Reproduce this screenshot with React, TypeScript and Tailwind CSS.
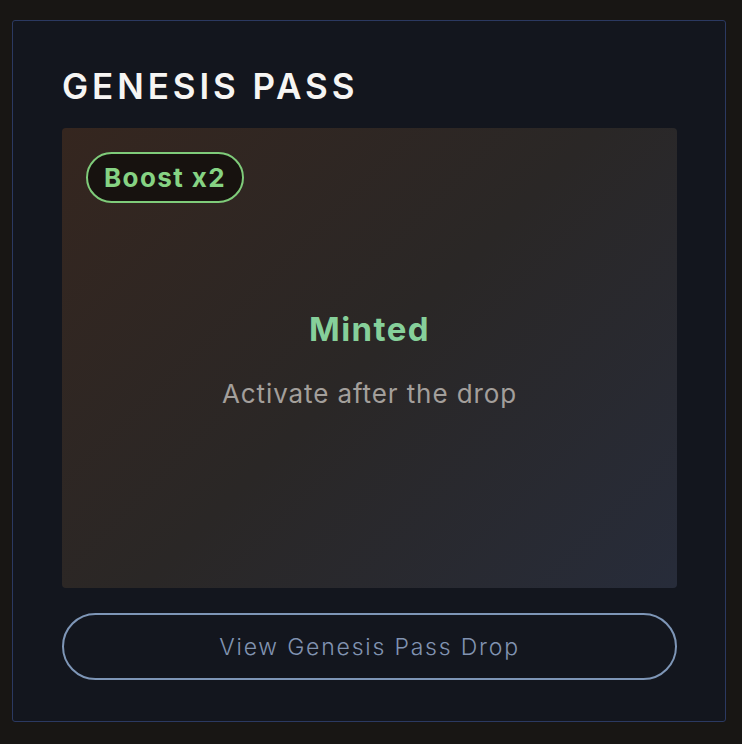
import React from "react";

export default function App() {
  return (
    <div className="min-h-[744px] w-[742px] bg-[#181614] pt-[20px] pl-[12px]" style={{ fontFamily: "Inter, 'Noto Sans', sans-serif" }}>
      <div className="w-[714px] h-[702px] rounded-[3px] border border-[#2b3961] bg-[#13161e] pl-[49px] pr-[48px] pt-[41px] flex flex-col">
        <h1 className="text-[35px] leading-[48px] font-semibold tracking-[3.9px] text-[#f6f5f3]">GENESIS PASS</h1>
        <div className="mt-[18px] h-[460px] shrink-0 rounded-[4px] bg-[linear-gradient(135deg,#35261f_0%,#2a2726_50%,#272c3a_100%)] relative flex flex-col items-center">
          <div className="absolute left-[24px] top-[24px] h-[51px] px-[16px] rounded-full border-2 border-[#7fcc7a] bg-[#17120f] flex items-center">
            <span className="text-[26px] font-bold tracking-[1.4px] text-[#86d383] leading-none">Boost x2</span>
          </div>
          <div className="mt-[181px] text-[33px] font-bold tracking-[1.4px] text-[#86d09a] leading-[40px]">Minted</div>
          <div className="mt-[29px] text-[26px] tracking-[0.9px] text-[#a39f9b] leading-[32px]">Activate after the drop</div>
        </div>
        <button className="mt-[25px] h-[67px] w-full shrink-0 rounded-full border-2 border-[#7e96b7] text-[23px] font-light tracking-[1.8px] text-[#8193b1] flex items-center justify-center pt-[1px]">
          View Genesis Pass Drop
        </button>
      </div>
    </div>
  );
}
